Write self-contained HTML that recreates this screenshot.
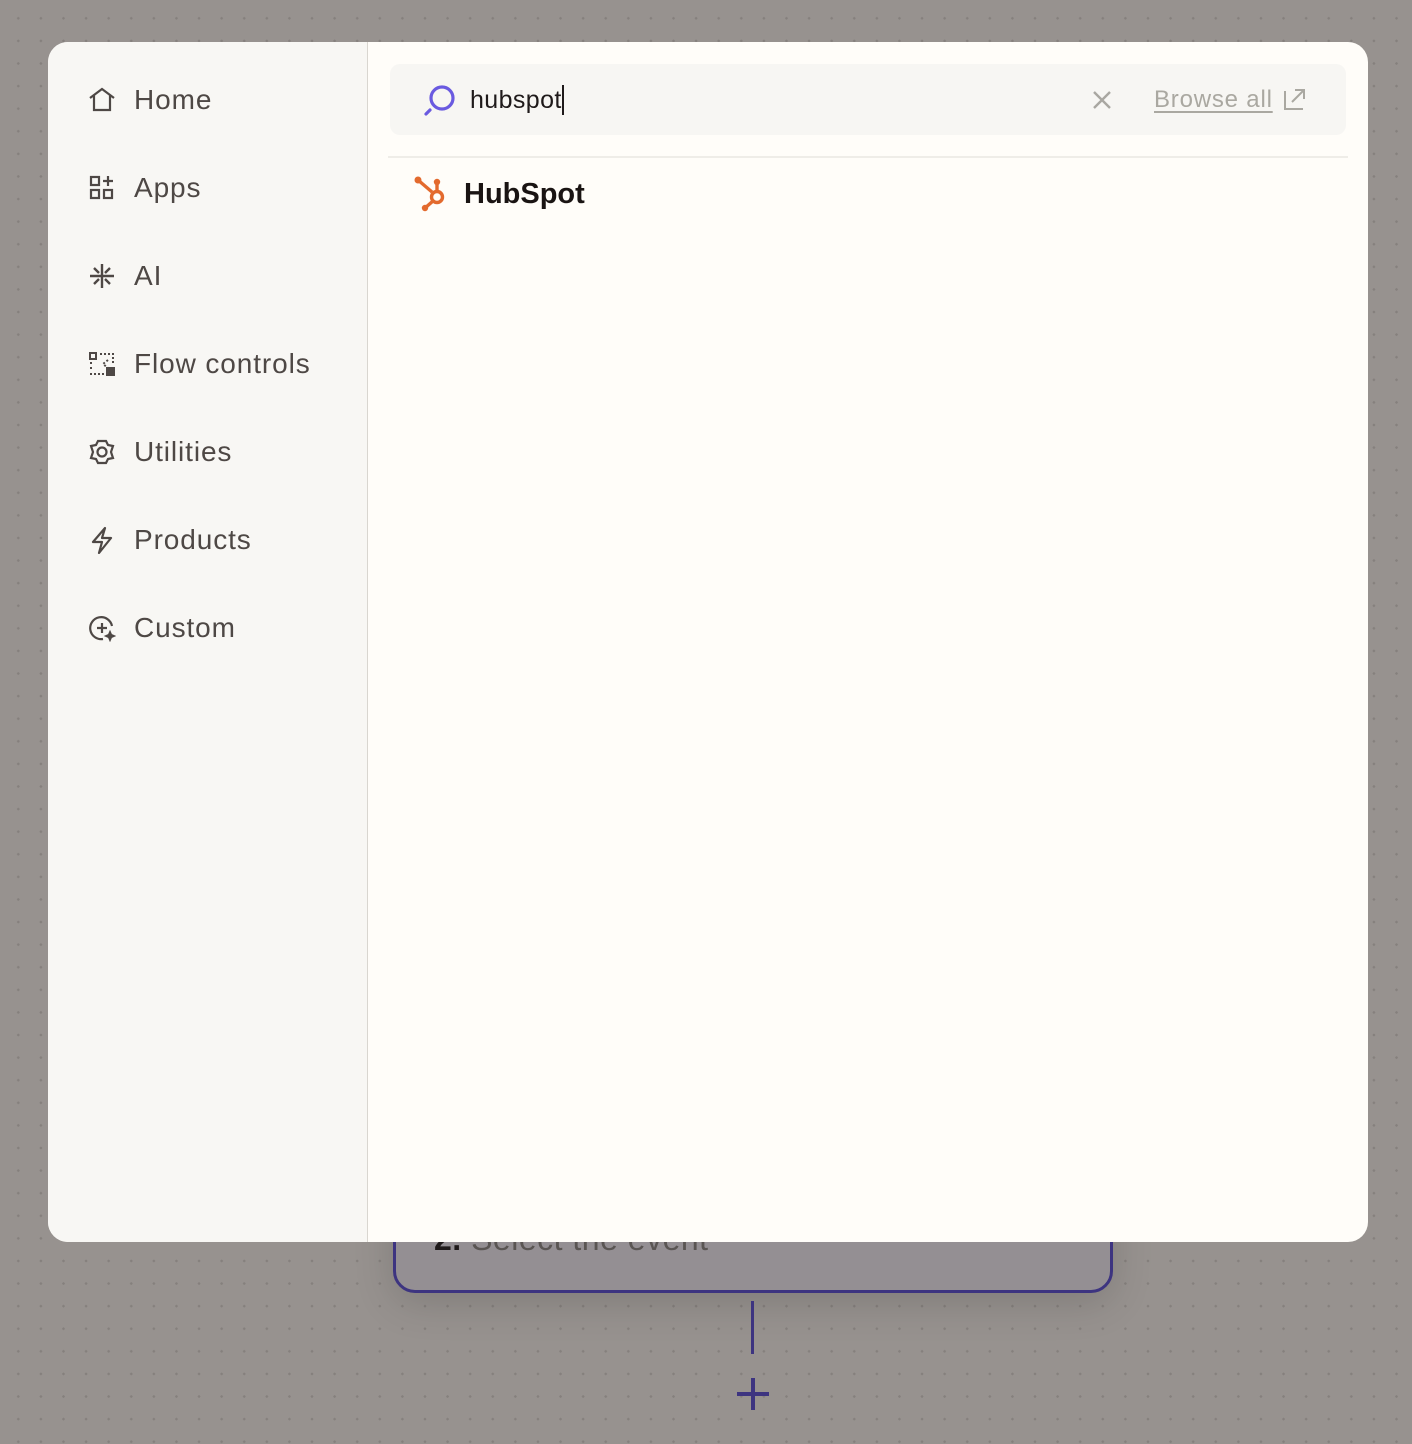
<!DOCTYPE html>
<html><head><meta charset="utf-8"><style>
*{margin:0;padding:0;box-sizing:border-box}
html,body{width:1412px;height:1444px;overflow:hidden}
body{background:#97928f;background-image:radial-gradient(circle,#85807d 1.2px,transparent 1.4px);background-size:22.6px 22.6px;background-position:7px 7px;font-family:"Liberation Sans",sans-serif;position:relative}
.card{position:absolute;left:393px;top:1180px;width:720px;height:113px;border:3px solid #3d3480;border-radius:22px;background:#948f93;box-shadow:0 10px 40px rgba(0,0,0,.15)}
.card span{position:absolute;left:38px;top:38px;font-size:32px;color:#5a5553;letter-spacing:0.5px}
.card b{color:#1f1a1a}
.vline{position:absolute;left:751px;top:1301px;width:3px;height:53px;background:#3d3480}
.plus{position:absolute;left:737px;top:1378px;width:32px;height:32px}
.plus:before{content:"";position:absolute;left:14px;top:0;width:4px;height:32px;background:#3d3480}
.plus:after{content:"";position:absolute;left:0;top:14px;width:32px;height:4px;background:#3d3480}
.modal{position:absolute;left:48px;top:42px;width:1320px;height:1200px;border-radius:20px;overflow:hidden;background:#fffdf9;display:flex}
.side{width:320px;background:#f8f7f4;border-right:1.5px solid #d9d6d0;height:100%;padding-top:36px}
.item{height:88px;display:flex;align-items:flex-start;padding-left:40px;font-size:28px;letter-spacing:0.9px;color:#4e4845;position:relative}
.item svg{width:28px;height:28px;margin-right:18px;margin-top:8px;flex:none}
.item span{line-height:44px}
.main{flex:1;position:relative}
.search{position:absolute;left:22px;top:22px;width:956px;height:71px;background:#f7f6f3;border-radius:10px}
.search .q{position:absolute;left:80px;top:21px;font-size:25px;color:#1f1a1a;line-height:30px;letter-spacing:0.4px}
.cur{display:inline-block;width:2px;height:30px;background:#1f1a1a;vertical-align:top}
.x{position:absolute;left:700px;top:24px}
.browse{position:absolute;left:764px;top:21px;font-size:24px;color:#aaa8a1;text-decoration:underline;text-underline-offset:4px;line-height:30px;letter-spacing:0.8px}
.hr{position:absolute;left:20px;right:20px;top:114px;height:2px;background:#efede8}
.res{position:absolute;left:96px;top:132px;font-size:29px;font-weight:bold;color:#1a1413;line-height:40px}
</style></head><body>
<div class="card"><span><b>2.</b> Select the event</span></div>
<div class="vline"></div>
<div class="plus"></div>
<div class="modal">
<div class="side">
<div class="item"><svg viewBox="0 0 28 28" fill="none" stroke="#4e4845" stroke-width="2.2"><path d="M2 12 L14 3 L26 12 M6 9 V24 H22 V9"/></svg><span>Home</span></div>
<div class="item"><svg viewBox="0 0 28 28" fill="none" stroke="#4e4845" stroke-width="2.2"><rect x="3" y="3" width="8" height="8"/><rect x="3" y="16" width="8" height="8"/><rect x="16" y="16" width="8" height="8"/><path d="M20 2v10M15 7h10"/></svg><span>Apps</span></div>
<div class="item"><svg viewBox="0 0 28 28" fill="none" stroke="#4e4845" stroke-width="2.4"><path d="M14 2v24M2 14h24M6 6l5 5M22 6l-5 5M6 22l5-5M22 22l-5-5"/></svg><span>AI</span></div>
<div class="item"><svg viewBox="0 0 28 28" fill="none" stroke="#4e4845" stroke-width="2"><rect x="2" y="3" width="6" height="6"/><path d="M12 4h13v9M2 13h2M2 18h2M2 24h16M20 10l-5 4 5 4" stroke-dasharray="2 2"/><rect x="19" y="18" width="7" height="7" fill="#4e4845"/></svg><span>Flow controls</span></div>
<div class="item"><svg viewBox="0 0 28 28" fill="none" stroke="#4e4845" stroke-width="2.2"><path d="M10 3h8l2 4 5 1 -2 6 2 6-5 1-2 4h-8l-2-4-5-1 2-6-2-6 5-1z"/><circle cx="14" cy="14" r="4.5"/></svg><span>Utilities</span></div>
<div class="item"><svg viewBox="0 0 28 28" fill="none" stroke="#4e4845" stroke-width="2.2" stroke-linejoin="round"><path d="M17 2 L5 16 H14 L11 27 L23 12 H14 Z"/></svg><span>Products</span></div>
<div class="item"><svg viewBox="0 0 28 28" fill="none" stroke="#4e4845" stroke-width="2.2"><path d="M24 12 A11 11 0 1 0 15 25"/><path d="M14 9v10M9 14h10"/><path d="M22 17l1.5 3.5 3.5 1.5-3.5 1.5L22 27l-1.5-3.5L17 22l3.5-1.5z" fill="#4e4845" stroke-width="1"/></svg><span>Custom</span></div>
</div>
<div class="main">
<div class="search">
<svg style="position:absolute;left:32px;top:19px" width="36" height="36" viewBox="0 0 36 36" fill="none" stroke="#6a5ae0" stroke-width="3.2"><circle cx="20" cy="15" r="11"/><path d="M8 27 L4 31" stroke-linecap="round"/></svg>
<div class="q">hubspot<span class="cur"></span></div>
<svg class="x" width="24" height="24" viewBox="0 0 24 24" stroke="#a9a7a1" stroke-width="2.4"><path d="M4 4L20 20M20 4L4 20"/></svg>
<div class="browse">Browse all</div>
<svg style="position:absolute;left:892px;top:22px" width="26" height="26" viewBox="0 0 26 26" fill="none" stroke="#aaa8a1" stroke-width="2"><path d="M3 5v18h18M10 16L22 4M13 4h9v9"/></svg>
</div>
<div class="hr"></div>
<svg style="position:absolute;left:0;top:0" width="100" height="230" viewBox="0 0 100 230" fill="none" stroke="#e36a2e" stroke-width="3.4" transform="translate(0,0)">
<g transform="translate(-320,-42)">
<path d="M370 180 L384 192"/><circle cx="370" cy="180" r="3.5" fill="#e36a2e" stroke="none"/>
<path d="M389 182 V191"/><circle cx="389" cy="182" r="3.2" fill="#e36a2e" stroke="none"/>
<circle cx="389" cy="197" r="5.5"/>
<path d="M385 201 L377 208"/><circle cx="377" cy="208" r="3.2" fill="#e36a2e" stroke="none"/>
</g></svg>
<div class="res">HubSpot</div>
</div>
</div>
</body></html>
